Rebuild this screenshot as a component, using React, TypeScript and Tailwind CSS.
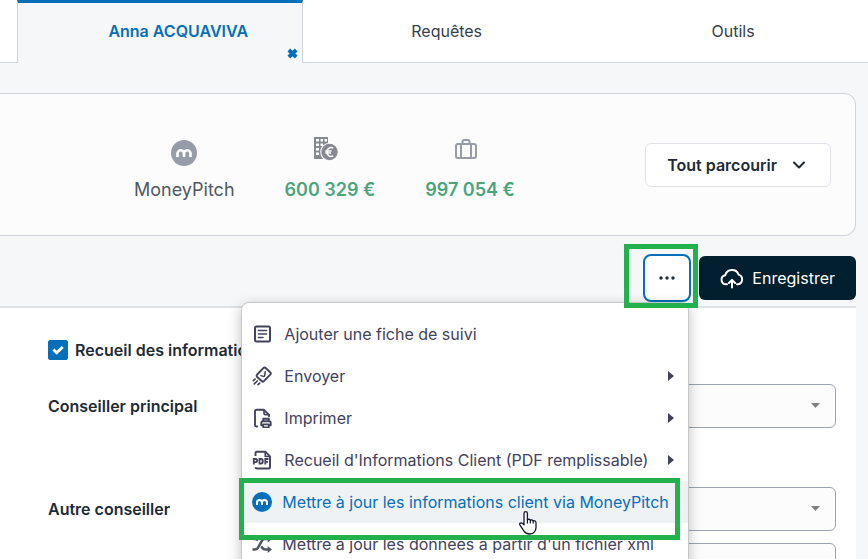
import type { ReactNode } from 'react';
import clsx from 'clsx';

type MenuEntry = {
  label: string;
  icon: ReactNode;
  submenu?: boolean;
  active?: boolean;
  compact?: boolean;
};

function MoneyPitchIcon({ className }: { className?: string }) {
  return (
    <svg viewBox="0 0 26 26" className={className} aria-hidden="true">
      <circle cx="13" cy="13" r="13" fill="currentColor" />
      <path
        d="M6.5 17v-3.200a3.250 3.500 0 0 1 6.500 0V17m0-3.200a3.250 3.500 0 0 1 6.500 0V17"
        fill="none"
        stroke="#fff"
        strokeWidth="2.600"
      />
    </svg>
  );
}

function BuildingEuroIcon() {
  return (
    <svg width="25" height="25" viewBox="0 0 25 25" className="text-[#868a90]" aria-hidden="true">
      <path d="M1 1h14v22H1z" fill="currentColor" />
      <path
        d="M3 3h3v2.500H3zM7.500 3H10v2.500H7.500zM11.500 3H14v2.500h-2.500zM3 7.500h3V10H3zM7.500 7.500H10V10H7.500zM3 12h3v2.500H3zM3 16.500h3V19H3z"
        fill="#fcfcfc"
      />
      <circle cx="16.500" cy="16" r="9.300" fill="#fcfcfc" />
      <circle cx="16.500" cy="16" r="8.200" fill="currentColor" />
      <path
        d="M20.200 12.200a4.200 4.200 0 0 0-2.200-.6c-2.500 0-3.800 1.900-3.800 4.400s1.300 4.400 3.800 4.400a4.200 4.200 0 0 0 2.200-.6M12.200 14.900h6.300M12.200 17.100h5.800"
        fill="none"
        stroke="#fcfcfc"
        strokeWidth="1.500"
      />
    </svg>
  );
}

function SuitcaseIcon() {
  return (
    <svg width="24" height="24" viewBox="0 0 24 24" fill="none" stroke="#969da9" strokeWidth="2" aria-hidden="true">
      <rect x="2" y="8" width="20" height="14" rx="2" />
      <path d="M7 8v14M17 8v14M8.500 8V6a2 2 0 0 1 2-2h3a2 2 0 0 1 2 2v2" />
    </svg>
  );
}

function NoteIcon() {
  return (
    <svg width="20" height="20" viewBox="0 0 20 20" fill="none" stroke="currentColor" strokeWidth="2" strokeLinecap="round" aria-hidden="true">
      <rect x="3" y="2.500" width="15" height="15" rx="1.500" />
      <path d="M6.500 6.500h8M6.500 10h8M6.500 13.500h4.500" strokeWidth="1.600" />
    </svg>
  );
}

function SendIcon() {
  return (
    <svg width="20" height="20" viewBox="0 0 20 20" fill="none" stroke="currentColor" strokeWidth="1.900" strokeLinecap="round" strokeLinejoin="round" aria-hidden="true">
      <path d="M5.200 8.500 11.300 2.200q1.300-1.200 2.600 0L18.200 6.200q1.200 1.200 0 2.500l-6.300 6.500q-1 1-2 .1L5.200 11q-1.200-1.200 0-2.500z" />
      <path d="m13.200 5.700-.5 3.900q-.2 1-1.200.8L8.900 9.600" strokeWidth="1.500" />
      <path d="m3 13.200-1.600 1.500M5.300 15l-3 2.900M7.600 17.200l-1.500 1.500" strokeWidth="1.700" />
    </svg>
  );
}

function PrintIcon() {
  return (
    <svg width="20" height="20" viewBox="0 0 20 20" fill="none" stroke="currentColor" strokeWidth="1.900" strokeLinecap="round" strokeLinejoin="round" aria-hidden="true">
      <path d="M5.200 18.500h-.7q-1.500 0-1.500-1.500V3.300q0-1.500 1.500-1.500H12L17 6.800v1.500" />
      <path d="M12 2v3.200q0 1.500 1.500 1.500H17" strokeWidth="1.700" />
      <path d="M11.200 13.200v-2.400h5.600v2.400M10.800 17.300H9.300v-2.500q0-1.600 1.600-1.600h6.200q1.600 0 1.600 1.600v2.500h-1.500" />
      <path d="M11.200 16.300h5.600v3h-5.600z" strokeWidth="1.700" />
    </svg>
  );
}

function PdfIcon() {
  return (
    <svg width="20" height="20" viewBox="0 0 20 20" fill="none" stroke="currentColor" strokeWidth="1.900" strokeLinejoin="round" aria-hidden="true">
      <path d="M3.500 6V3q0-1.200 1.200-1.200h8.800L18 6.300v10.900q0 1.300-1.200 1.300H5q-1.300 0-1.500-1.400" />
      <path d="M13.300 2v4.500H18" strokeWidth="1.700" />
      <path d="M0 7.600h16.600v7.600H0z" fill="#fff" stroke="none" />
      <path
        d="M1.800 14.500V9h1.800a1.600 1.600 0 0 1 0 3.200H1.800M7.500 9v4.700H9q1.800 0 1.800-2.350T9 9zM13.300 14.500V9h3.200M13.300 11.800h2.700"
        strokeWidth="1.800"
        strokeLinejoin="miter"
      />
    </svg>
  );
}

function ShuffleIcon() {
  return (
    <svg width="20" height="20" viewBox="0 0 20 20" fill="none" stroke="currentColor" strokeWidth="2.500" className="text-[#505762]" aria-hidden="true">
      <path d="M.5 15.500h2.300q2 0 3.200-1.800l4-7Q11 5 13 5h3.500" />
      <path d="M1.500 5h1.800q1.800 0 2.800 1.500M9.300 12.300l.9 1.500q1.100 1.700 3.100 1.700h3.200" />
      <path d="m15.700 1.400 4.300 3.600-4.300 3.600zM15.700 11.900l4.300 3.600-4.300 3.600z" fill="currentColor" stroke="none" />
    </svg>
  );
}

function CloudUploadIcon() {
  return (
    <svg width="24" height="22" viewBox="0 0 24 22" fill="none" stroke="currentColor" strokeWidth="2" strokeLinecap="round" strokeLinejoin="round" aria-hidden="true">
      <path d="M7 17.300H6a4.600 4.600 0 0 1-.8-9.100A7 7 0 0 1 18.600 7.600 5 5 0 0 1 18 17.300h-1" />
      <path d="M12 20.500v-7.300M8.900 16l3.100-3.100 3.100 3.100" />
    </svg>
  );
}

function HandCursor() {
  return (
    <svg width="20" height="26" viewBox="0 0 20 26" aria-hidden="true">
      <path
        d="M6 14.800V3.400a1.700 1.700 0 0 1 3.400 0v6.300q1.500-1 3 .4 1.700-.8 2.700.7 2.700-.5 2.900 2v4.700q0 2.500-1.500 4.300-1.600 2.200-5 2.200-3.800 0-5.500-2.800l-4-6q-.9-1.500.4-2.100 1.200-.5 2.200.5z"
        fill="#fff"
        stroke="#15152b"
        strokeWidth="1.300"
        strokeLinejoin="round"
      />
      <path d="M9.400 9.500v4M12.300 10v3.500M15.200 11v2.500" stroke="#15152b" strokeWidth="1.200" />
    </svg>
  );
}

const menuEntries: MenuEntry[] = [
  { label: 'Ajouter une fiche de suivi', icon: <NoteIcon /> },
  { label: 'Envoyer', icon: <SendIcon />, submenu: true },
  { label: 'Imprimer', icon: <PrintIcon />, submenu: true },
  { label: "Recueil d'Informations Client (PDF remplissable)", icon: <PdfIcon />, submenu: true },
  {
    label: 'Mettre à jour les informations client via MoneyPitch',
    icon: <MoneyPitchIcon className="size-5" />,
    active: true,
    compact: true,
  },
  { label: "Mettre à jour les données à partir d'un fichier xml", icon: <ShuffleIcon />, compact: true },
];

function Tabs() {
  return (
    <nav className="flex h-[63px] bg-white">
      <div className="w-[17px] shrink-0 border-b border-[#ced4da]" />
      <div className="relative flex w-[33%] shrink-0 items-center justify-center border-x border-t-3 border-x-[#ced4da] border-t-[#066fba] bg-[#f5f7f9] pb-1">
        <a href="#client" className="pl-9 font-semibold text-[#066fba]">
          Anna ACQUAVIVA
        </a>
        <button type="button" aria-label="Fermer" className="absolute right-1 bottom-1 text-[#066fba]">
          <svg width="11" height="11" viewBox="0 0 11 11" aria-hidden="true">
            <path d="m1.800 2 7.400 7M9.200 2 1.800 9" stroke="currentColor" strokeWidth="3.800" />
          </svg>
        </button>
      </div>
      <a href="#requetes" className="flex w-[33%] shrink-0 items-center justify-center border-b border-[#ced4da]">
        Requêtes
      </a>
      <a href="#outils" className="flex w-[33%] shrink-0 items-center justify-center border-b border-[#ced4da]">
        Outils
      </a>
    </nav>
  );
}

function Summary() {
  return (
    <section className="mt-[30px] mr-3 flex h-[143px] items-center rounded-r-xl border border-l-0 border-[#ced4da] bg-[#fcfcfc] pr-6 pl-[134px] text-lg">
      <div className="flex gap-[50px] pt-2.5">
        <div className="flex flex-col items-center gap-2.5">
          <div className="flex h-[30px] items-end">
            <MoneyPitchIcon className="size-[26px] text-[#969da9]" />
          </div>
          <span className="text-[#505762]">MoneyPitch</span>
        </div>
        <div className="flex flex-col items-center gap-2.5 font-semibold text-[#4ba57c]">
          <div className="flex h-[30px] items-start pr-2">
            <BuildingEuroIcon />
          </div>
          600 329 €
        </div>
        <div className="flex flex-col items-center gap-2.5 font-semibold text-[#4ba57c]">
          <div className="flex h-[30px] items-start pr-2">
            <SuitcaseIcon />
          </div>
          997 054 €
        </div>
      </div>
      <button
        type="button"
        className="ml-auto flex h-11 items-center gap-[15px] rounded-md border border-[#dee2e6] bg-white pr-6 pl-[21px] text-base font-semibold text-[#212b36]"
      >
        Tout parcourir
        <svg width="14" height="14" viewBox="0 0 14 14" fill="none" stroke="currentColor" strokeWidth="2" strokeLinecap="round" strokeLinejoin="round" aria-hidden="true">
          <path d="m2 4.500 5 5 5-5" />
        </svg>
      </button>
    </section>
  );
}

function ActionsMenu() {
  return (
    <ul className="absolute top-12 right-0.5 z-10 w-[448px] rounded-lg border border-[#c5c7ca] bg-white py-2.5 text-[#43425d] shadow-[0_4px_14px_rgba(0,0,0,0.25)]">
      {menuEntries.map((entry) => (
        <li key={entry.label}>
          <button
            type="button"
            className={clsx(
              'flex h-[42px] w-full items-center px-2.5 text-left whitespace-nowrap',
              entry.compact ? 'gap-2.5' : 'gap-3',
              entry.active && 'bg-[#eef2f5] text-[#066fba]',
            )}
          >
            {entry.icon}
            {entry.label}
            {entry.submenu ? (
              <svg width="6" height="10" viewBox="0 0 6 10" className="mr-1 ml-auto" aria-hidden="true">
                <path d="M0 0l6 5-6 5z" fill="currentColor" />
              </svg>
            ) : null}
          </button>
        </li>
      ))}
    </ul>
  );
}

function Toolbar() {
  return (
    <div className="mr-3 flex h-[70px] items-center justify-end gap-2 pt-3.5">
      <div className="relative">
        <button
          type="button"
          aria-label="Plus d'actions"
          className="flex size-12 items-center justify-center rounded-lg border-2 border-[#066fba] bg-white text-[#212b36]"
        >
          <svg width="16" height="4" viewBox="0 0 16 4" fill="currentColor" aria-hidden="true">
            <circle cx="2" cy="2" r="1.700" />
            <circle cx="8" cy="2" r="1.700" />
            <circle cx="14" cy="2" r="1.700" />
          </svg>
        </button>
        <ActionsMenu />
        {/* repères du tutoriel */}
        <div className="pointer-events-none absolute -top-2.5 -right-[7px] z-20 h-16 w-[74px] border-5 border-[#22b14c]" />
        <div className="pointer-events-none absolute top-56 right-[11px] z-20 h-[62px] w-[441px] border-5 border-[#22b14c]" />
        <div className="pointer-events-none absolute top-64 right-[153px] z-30">
          <HandCursor />
        </div>
      </div>
      <button type="button" className="flex h-11 items-center gap-2 rounded-md bg-[#021f30] px-[21px] text-white">
        <CloudUploadIcon />
        Enregistrer
      </button>
    </div>
  );
}

function SelectField({ id, label }: { id: string; label: string }) {
  return (
    <div className="flex h-11 items-center">
      <label htmlFor={id} className="w-[200px] shrink-0 font-semibold">
        {label}
      </label>
      <div className="relative flex-1">
        <select
          id={id}
          className="block h-11 w-full appearance-none rounded-md border border-[#9aa5b1] bg-[#fcfcfc] px-3"
        />
        <svg width="9" height="5" viewBox="0 0 9 5" className="pointer-events-none absolute top-[19px] right-4" aria-hidden="true">
          <path d="M0 0h9L4.500 5z" fill="#808080" />
        </svg>
      </div>
    </div>
  );
}

function ClientForm() {
  return (
    <form className="mr-3 h-[300px] border-t-2 border-[#dee2e6] bg-white pt-8 pr-5 pl-12 text-[#212b36]">
      <div className="flex h-5 items-center gap-[7px]">
        <span className="relative flex size-5">
          <input
            id="recueil"
            type="checkbox"
            defaultChecked
            className="size-5 appearance-none rounded-xs border border-[#066fba] checked:bg-[#066fba]"
          />
          <svg width="12" height="10" viewBox="0 0 12 10" fill="none" stroke="#fff" strokeWidth="2.800" className="pointer-events-none absolute top-[5px] left-1" aria-hidden="true">
            <path d="m1.500 4.500 3.200 3.200 6-5.700" />
          </svg>
        </span>
        <label htmlFor="recueil" className="font-semibold">
          Recueil des informations
        </label>
      </div>
      <div className="mt-6">
        <SelectField id="conseiller" label="Conseiller principal" />
      </div>
      <div className="mt-[59px] flex flex-col gap-3">
        <SelectField id="autre" label="Autre conseiller" />
        <SelectField id="suivant" label="" />
      </div>
    </form>
  );
}

export default function App() {
  return (
    <main className="h-screen overflow-hidden bg-[#f5f7f9] font-['Inter',sans-serif] text-base text-[#343f4b]">
      <Tabs />
      <Summary />
      <Toolbar />
      <ClientForm />
    </main>
  );
}
